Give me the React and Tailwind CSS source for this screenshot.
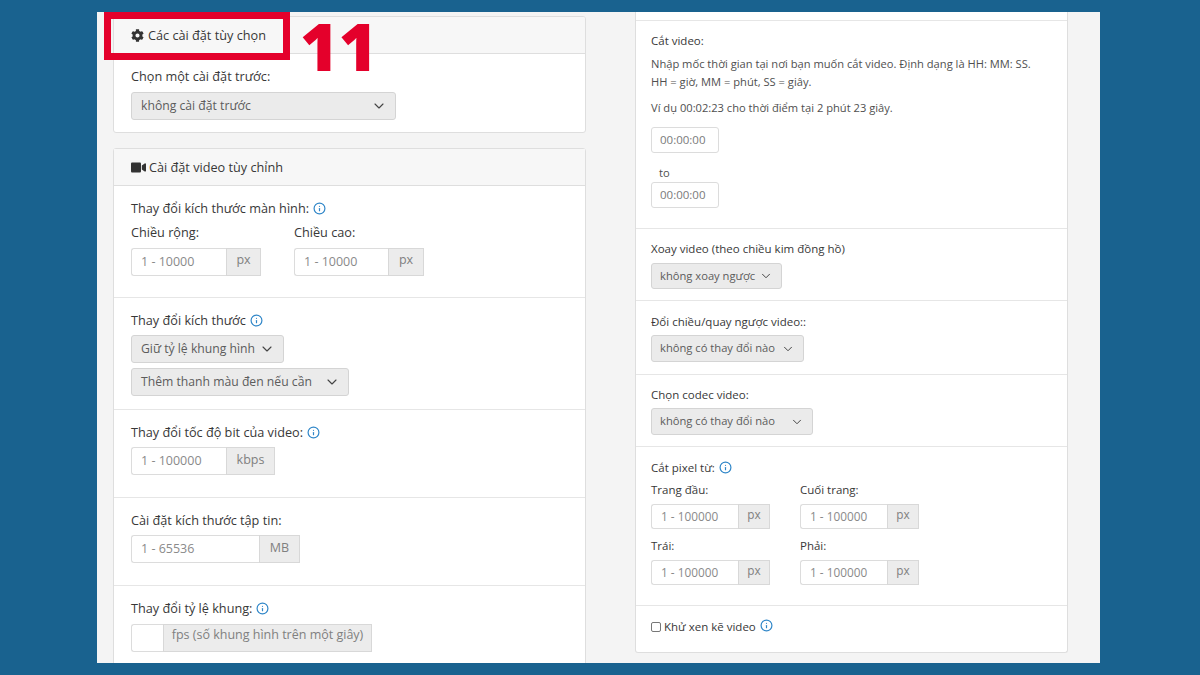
import React from 'react';
import { ChevronDown, Info } from 'lucide-react';
import { FaCog, FaVideo } from 'react-icons/fa';

const Tip = () => <Info size={13} strokeWidth={2.2} className="inline-block ml-[4px] -mt-[2px] text-[#2f86c8]" />;

const Label = ({ children, tip, small, className = '' }) => (
    <div className={`h-[18px] leading-[18px] font-medium text-[#383838] whitespace-nowrap ${small ? 'text-[11.5px]' : 'text-[12.7px]'} ${className}`}>
        {children}
        {tip && <Tip />}
    </div>
);

const Select = ({ text, width, small, height = 'h-[28px]', className = '' }) => (
    <div className={`flex items-center justify-between rounded-[3px] border border-[#d4d4d4] bg-[#ebebeb] text-[#5c5c5c] whitespace-nowrap ${small ? 'pl-[8px] pr-[8px] text-[11.2px]' : 'pl-[9px] pr-[8px] text-[12.2px]'} ${height} ${width} ${className}`}>
        <span>{text}</span>
        <ChevronDown size={small ? 14 : 16} strokeWidth={1.7} className="shrink-0 text-[#444]" />
    </div>
);

const UnitInput = ({ placeholder, unit, inputWidth, unitWidth, small, unitPt = 'pt-[2px]', height = 'h-[28px]', className = '' }) => (
    <div className={`flex ${height} ${small ? 'text-[11.8px]' : 'text-[12.5px]'} ${className}`}>
        <div className={`flex items-center pl-[9px] pt-[1px] bg-white border border-r-0 border-[#dcdcdc] rounded-l-[3px] text-[#8a8a8a] ${inputWidth}`}>
            {placeholder}
        </div>
        <div className={`flex justify-center bg-[#ececec] border border-[#d8d8d8] text-[#808080] whitespace-nowrap ${unitPt} ${unitWidth}`}>
            {unit}
        </div>
    </div>
);

const TimeInput = ({ className = '' }) => (
    <div className={`flex h-[26px] w-[68px] items-center pl-[8px] bg-white border border-[#dcdcdc] rounded-[3px] text-[11.5px] text-[#7a7a7a] ${className}`}>
        00:00:00
    </div>
);

const Section = ({ height, pt = 'pt-[13px]', px = 'px-[17px]', children }) => (
    <div className={`border-b border-[#e6e6e6] ${px} ${height} ${pt}`}>{children}</div>
);

const CardHeader = ({ icon, title }) => (
    <div className="flex items-center h-[37px] pl-[17px] pt-[1px] bg-[#f7f7f7] border-b border-[#dedede] text-[12.7px] font-medium text-[#383838]">
        {icon}
        {title}
    </div>
);

export default function App() {
    return (
        <div className="w-[1200px] h-[675px] overflow-hidden bg-[#19628f] pt-[12px] pl-[97px] font-['Open_Sans',sans-serif] relative">
            <div className="flex w-[1003px] h-[651px] overflow-hidden bg-[#f4f4f4] pl-[16px] gap-[49px]">
                {/* left column */}
                <div className="w-[473px] pt-[4px] shrink-0">
                    <div className="h-[117px] bg-white border border-[#dedede] rounded-[3px] overflow-hidden">
                        <CardHeader icon={<FaCog size={13} className="mr-[4px] text-[#333]" />} title="Các cài đặt tùy chọn" />
                        <div className="px-[17px] pt-[13px]">
                            <Label>Chọn một cài đặt trước:</Label>
                            <Select text="không cài đặt trước" width="w-[265px]" className="mt-[7px]" />
                        </div>
                    </div>

                    <div className="mt-[15px] bg-white border border-[#dedede] rounded-t-[3px]">
                        <CardHeader icon={<FaVideo size={15} className="mr-[3px] text-[#333]" />} title="Cài đặt video tùy chỉnh" />
                        <Section height="h-[112px]">
                            <Label tip>Thay đổi kích thước màn hình:</Label>
                            <div className="flex gap-[33px] mt-[6px]">
                                <div>
                                    <Label>Chiều rộng:</Label>
                                    <UnitInput placeholder="1 - 10000" unit="px" inputWidth="w-[95px]" unitWidth="w-[35px]" className="mt-[7px]" />
                                </div>
                                <div>
                                    <Label>Chiều cao:</Label>
                                    <UnitInput placeholder="1 - 10000" unit="px" inputWidth="w-[94px]" unitWidth="w-[36px]" className="mt-[7px]" />
                                </div>
                            </div>
                        </Section>
                        <Section height="h-[112px]">
                            <Label tip>Thay đổi kích thước</Label>
                            <Select text="Giữ tỷ lệ khung hình" width="w-[153px]" className="mt-[6px]" />
                            <Select text="Thêm thanh màu đen nếu cần" width="w-[218px]" className="mt-[5px]" />
                        </Section>
                        <Section height="h-[88px]">
                            <Label tip>Thay đổi tốc độ bit của video:</Label>
                            <UnitInput placeholder="1 - 100000" unit="kbps" unitPt="pt-[3px]" inputWidth="w-[95px]" unitWidth="w-[49px]" className="mt-[6px]" />
                        </Section>
                        <Section height="h-[88px]">
                            <Label>Cài đặt kích thước tập tin:</Label>
                            <UnitInput placeholder="1 - 65536" unit="MB" unitPt="pt-[3px]" inputWidth="w-[128px]" unitWidth="w-[41px]" className="mt-[6px]" />
                        </Section>
                        <Section height="h-[90px]">
                            <Label tip>Thay đổi tỷ lệ khung:</Label>
                            <UnitInput placeholder="" unit="fps (số khung hình trên một giây)" unitPt="pt-[1px]" inputWidth="w-[32px]" unitWidth="w-[209px]" className="mt-[7px]" />
                        </Section>
                    </div>
                </div>

                {/* right column */}
                <div className="w-[433px] shrink-0">
                    <div className="h-[641px] bg-white border-x border-b border-[#dedede] rounded-b-[3px]">
                        <div className="h-[9px] border-b border-[#e6e6e6]" />
                        <Section height="h-[208px]" pt="pt-[11px]" px="px-[15px]">
                            <Label small>Cắt video:</Label>
                            <p className="mt-[5px] text-[11.15px] leading-[17.5px] text-[#4f4f4f] whitespace-nowrap">
                                Nhập mốc thời gian tại nơi bạn muốn cắt video. Định dạng là HH: MM: SS.
                                <br />
                                HH = giờ, MM = phút, SS = giây.
                            </p>
                            <p className="mt-[9px] text-[11.15px] leading-[18px] text-[#4f4f4f]">Ví dụ 00:02:23 cho thời điểm tại 2 phút 23 giây.</p>
                            <TimeInput className="mt-[10px]" />
                            <div className="mt-[12px] pl-[8px] h-[16px] leading-[16px] text-[11.15px] text-[#4f4f4f]">to</div>
                            <TimeInput className="mt-[1px]" />
                        </Section>
                        <Section height="h-[72px]" pt="pt-[11px]" px="px-[15px]">
                            <Label small>Xoay video (theo chiều kim đồng hồ)</Label>
                            <Select small text="không xoay ngược" width="w-[131px]" height="h-[26px]" className="mt-[5px]" />
                        </Section>
                        <Section height="h-[74px]" pt="pt-[12px]" px="px-[15px]">
                            <Label small>Đổi chiều/quay ngược video::</Label>
                            <Select small text="không có thay đổi nào" width="w-[153px]" height="h-[27px]" className="mt-[4px]" />
                        </Section>
                        <Section height="h-[72px]" pt="pt-[11px]" px="px-[15px]">
                            <Label small>Chọn codec video:</Label>
                            <Select small text="không có thay đổi nào" width="w-[162px]" height="h-[27px]" className="mt-[4px]" />
                        </Section>
                        <Section height="h-[159px]" pt="pt-[12px]" px="px-[15px]">
                            <Label small tip>Cắt pixel từ:</Label>
                            <div className="grid grid-cols-[149px_120px] gap-y-[8px] mt-[4px]">
                                {['Trang đầu:', 'Cuối trang:', 'Trái:', 'Phải:'].map((name) => (
                                    <div key={name}>
                                        <Label small>{name}</Label>
                                        <UnitInput small placeholder="1 - 100000" unit="px" unitPt="pt-[1px]" inputWidth="w-[87px]" unitWidth="w-[32px]" height="h-[25px]" className="mt-[5px]" />
                                    </div>
                                ))}
                            </div>
                        </Section>
                        <div className="flex items-center px-[15px] pt-[12px] text-[11.5px] font-medium text-[#383838]">
                            <span className="w-[10px] h-[10px] mr-[3px] border border-[#777] rounded-[2px] bg-white" />
                            Khử xen kẽ video
                            <Tip />
                        </div>
                    </div>
                </div>
            </div>

            {/* red annotation over the screenshot */}
            <div className="absolute left-[104px] top-[12px] w-[186px] h-[48px] border-[7px] border-[#e4002b]" />
            <div className="absolute left-[300px] top-[1px] text-[66px] leading-[88px] font-extrabold text-[#e4002b]">11</div>
        </div>
    );
}
